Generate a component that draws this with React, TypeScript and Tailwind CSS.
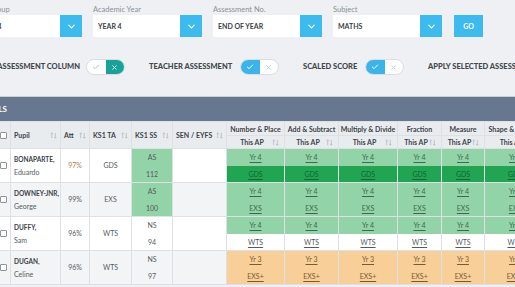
import { Check, ChevronDown, X } from "lucide-react";

type Tone = "light" | "dark" | "white" | "orange";

const tones: Record<Tone, string> = {
  light: "bg-[#93d3a8] text-[#3c6a4d]",
  dark: "bg-[#22a553] text-[#0e6531]",
  white: "text-[#555b61]",
  orange: "bg-[#f8ce99] text-[#7a5a32]",
};

const subjects = ["Number & Place", "Add & Subtract", "Multiply & Divide", "Fraction", "Measure", "Shape & Position"];

const pupils = [
  { last: "BONAPARTE,", first: "Eduardo", att: "97%", ta: "GDS", ss: ["AS", "112"], ssGreen: true, top: "Yr 4", topTone: "light" as Tone, bottom: "GDS", bottomTone: "dark" as Tone },
  { last: "DOWNEY-JNR,", first: "George", att: "99%", ta: "EXS", ss: ["AS", "100"], ssGreen: true, top: "Yr 4", topTone: "light" as Tone, bottom: "EXS", bottomTone: "light" as Tone },
  { last: "DUFFY,", first: "Sam", att: "96%", ta: "WTS", ss: ["NS", "94"], ssGreen: false, top: "Yr 4", topTone: "light" as Tone, bottom: "WTS", bottomTone: "white" as Tone },
  { last: "DUGAN,", first: "Celine", att: "96%", ta: "WTS", ss: ["NS", "97"], ssGreen: false, top: "Yr 3", topTone: "orange" as Tone, bottom: "EXS+", bottomTone: "orange" as Tone },
];

const filters = [
  { label: "Year Group", value: "YEAR 4" },
  { label: "Academic Year", value: "YEAR 4" },
  { label: "Assessment No.", value: "END OF YEAR" },
  { label: "Subject", value: "MATHS" },
];

function SortIcon() {
  return (
    <svg width="7" height="7" viewBox="0 0 8 8" className="shrink-0" fill="none" stroke="#b4b9c0" strokeWidth="0.9">
      <path d="M2 7V1M0.8 2.2L2 1l1.2 1.2M6 1v6M4.8 5.8L6 7l1.2-1.2" />
    </svg>
  );
}

function Checkbox() {
  return <span className="mx-auto block h-[7px] w-[7px] rounded-[1px] border border-[#8f959c] bg-white" />;
}

function Toggle({ on, color }: { on: boolean; color: string }) {
  return (
    <div className="flex h-[16px] w-[39px] shrink-0 overflow-hidden rounded-full border border-[#d9dde2] bg-white">
      <div className={`flex flex-1 items-center justify-center ${on ? color : ""}`}>
        <Check size={8} strokeWidth={3} className={on ? "text-white" : "text-[#b9bdc2]"} />
      </div>
      <div className={`flex flex-1 items-center justify-center ${on ? "" : color}`}>
        <X size={7} strokeWidth={3} className={on ? "text-[#c4c8cc]" : "text-white"} />
      </div>
    </div>
  );
}

function App() {
  const cell = "border border-[#dde1e6]";

  return (
    <div className="h-[287px] w-[515px] overflow-hidden bg-[#eef0f3] font-['Lato',sans-serif] text-[#444a50]">
      {/* filters */}
      <div className="ml-[-27px] flex items-end gap-[11px] pt-[5px]">
        {filters.map((f) => (
          <div key={f.label} className="w-[109px] shrink-0">
            <p className="h-[10px] text-[7.5px] leading-[10px] text-[#8a9098]">{f.label}</p>
            <div className="flex h-[22px] bg-white">
              <span className="flex flex-1 items-center pl-[5px] text-[7px] font-bold text-[#3a3f45]">{f.value}</span>
              <span className="flex w-[22px] items-center justify-center bg-[#3dbaee]">
                <ChevronDown size={11} strokeWidth={2.5} className="text-white" />
              </span>
            </div>
          </div>
        ))}
        <button type="button" className="ml-[1px] h-[22px] w-[29px] shrink-0 bg-[#3dbaee] text-[7px] font-bold text-white">
          GO
        </button>
      </div>

      {/* toggles */}
      <div className="mt-[22px] flex h-[16px] items-center gap-[24px] whitespace-nowrap text-[7.5px] font-black text-[#43484e]">
        <div className="ml-[-95px] flex w-[220px] shrink-0 items-center justify-end gap-[6px]">
          <span>SHOW ASSESSMENT COLUMN</span>
          <Toggle on={false} color="bg-[#16a39a]" />
        </div>
        <div className="flex w-[130px] shrink-0 items-center justify-between">
          <span>TEACHER ASSESSMENT</span>
          <Toggle on color="bg-[#3bb4ea]" />
        </div>
        <div className="flex w-[101px] shrink-0 items-center justify-between">
          <span>SCALED SCORE</span>
          <Toggle on color="bg-[#3bb4ea]" />
        </div>
        <div className="shrink-0">APPLY SELECTED ASSESSMENT</div>
      </div>

      {/* panel */}
      <div className="ml-[-4px] mt-[21px] w-[560px] bg-white">
        <div className="flex h-[25px] items-center border-t border-[#c8cfd9] bg-[#687790]">
          <div className="flex w-[11px] justify-end whitespace-nowrap text-[8px] font-bold text-white">
            <span>PUPILS</span>
          </div>
        </div>
        <table className="w-[549px] table-fixed border-collapse text-[7px]">
          <colgroup>
            <col className="w-[14px]" />
            <col className="w-[50px]" />
            <col className="w-[29px]" />
            <col className="w-[42px]" />
            <col className="w-[41px]" />
            <col className="w-[54px]" />
            <col className="w-[58px]" />
            <col className="w-[54px]" />
            <col className="w-[59px]" />
            <col className="w-[44px]" />
            <col className="w-[43px]" />
            <col className="w-[61px]" />
          </colgroup>
          <thead className="bg-[#e9ecef] font-bold text-[#3d4248]">
            <tr className="h-[14px]">
              <th rowSpan={2} className={cell}>
                <Checkbox />
              </th>
              {["Pupil", "Att", "KS1 TA", "KS1 SS", "SEN / EYFS"].map((h) => (
                <th key={h} rowSpan={2} className={cell}>
                  <div className="flex items-center justify-between whitespace-nowrap px-[3px]">
                    <span>{h}</span>
                    <SortIcon />
                  </div>
                </th>
              ))}
              {subjects.map((s) => (
                <th key={s} className={`${cell} h-[14px] whitespace-nowrap text-center leading-[12px]`}>
                  {s}
                </th>
              ))}
            </tr>
            <tr className="h-[13px]">
              {subjects.map((s) => (
                <th key={s} className={`${cell} h-[13px] leading-[11px]`}>
                  <div className="flex items-center justify-between whitespace-nowrap px-[5px]">
                    <span className="flex-1 text-center">This AP</span>
                    <SortIcon />
                  </div>
                </th>
              ))}
            </tr>
          </thead>
          <tbody className="text-[#555b61]">
            {pupils.map((p, i) => (
              <tr key={p.last} className={i % 2 === 1 ? "bg-[#f2f4f6]" : "bg-white"}>
                <td className={cell}>
                  <Checkbox />
                </td>
                <td className={`${cell} pl-[3px]`}>
                  <p className="text-[6.5px] font-bold leading-[12px] text-[#3d4248]">{p.last}</p>
                  <p className="leading-[12px]">{p.first}</p>
                </td>
                <td className={`${cell} text-center ${i === 0 ? "text-[#b4834f]" : ""}`}>{p.att}</td>
                <td className={`${cell} text-center`}>{p.ta}</td>
                <td className={`${cell} p-0 text-center ${p.ssGreen ? "bg-[#93d3a8]" : ""}`}>
                  <div className="flex h-[16.5px] items-center justify-center">{p.ss[0]}</div>
                  <div className="flex h-[16.5px] items-center justify-center">{p.ss[1]}</div>
                </td>
                <td className={cell} />
                {subjects.map((s) => (
                  <td key={s} className={`${cell} p-0 text-center`}>
                    <div className={`flex h-[16.5px] items-center justify-center underline underline-offset-2 ${tones[p.topTone]}`}>
                      {p.top}
                    </div>
                    <div className={`flex h-[16.5px] items-center justify-center underline underline-offset-2 ${tones[p.bottomTone]}`}>
                      {p.bottom}
                    </div>
                  </td>
                ))}
              </tr>
            ))}
          </tbody>
        </table>
      </div>
    </div>
  );
}

export default App;
